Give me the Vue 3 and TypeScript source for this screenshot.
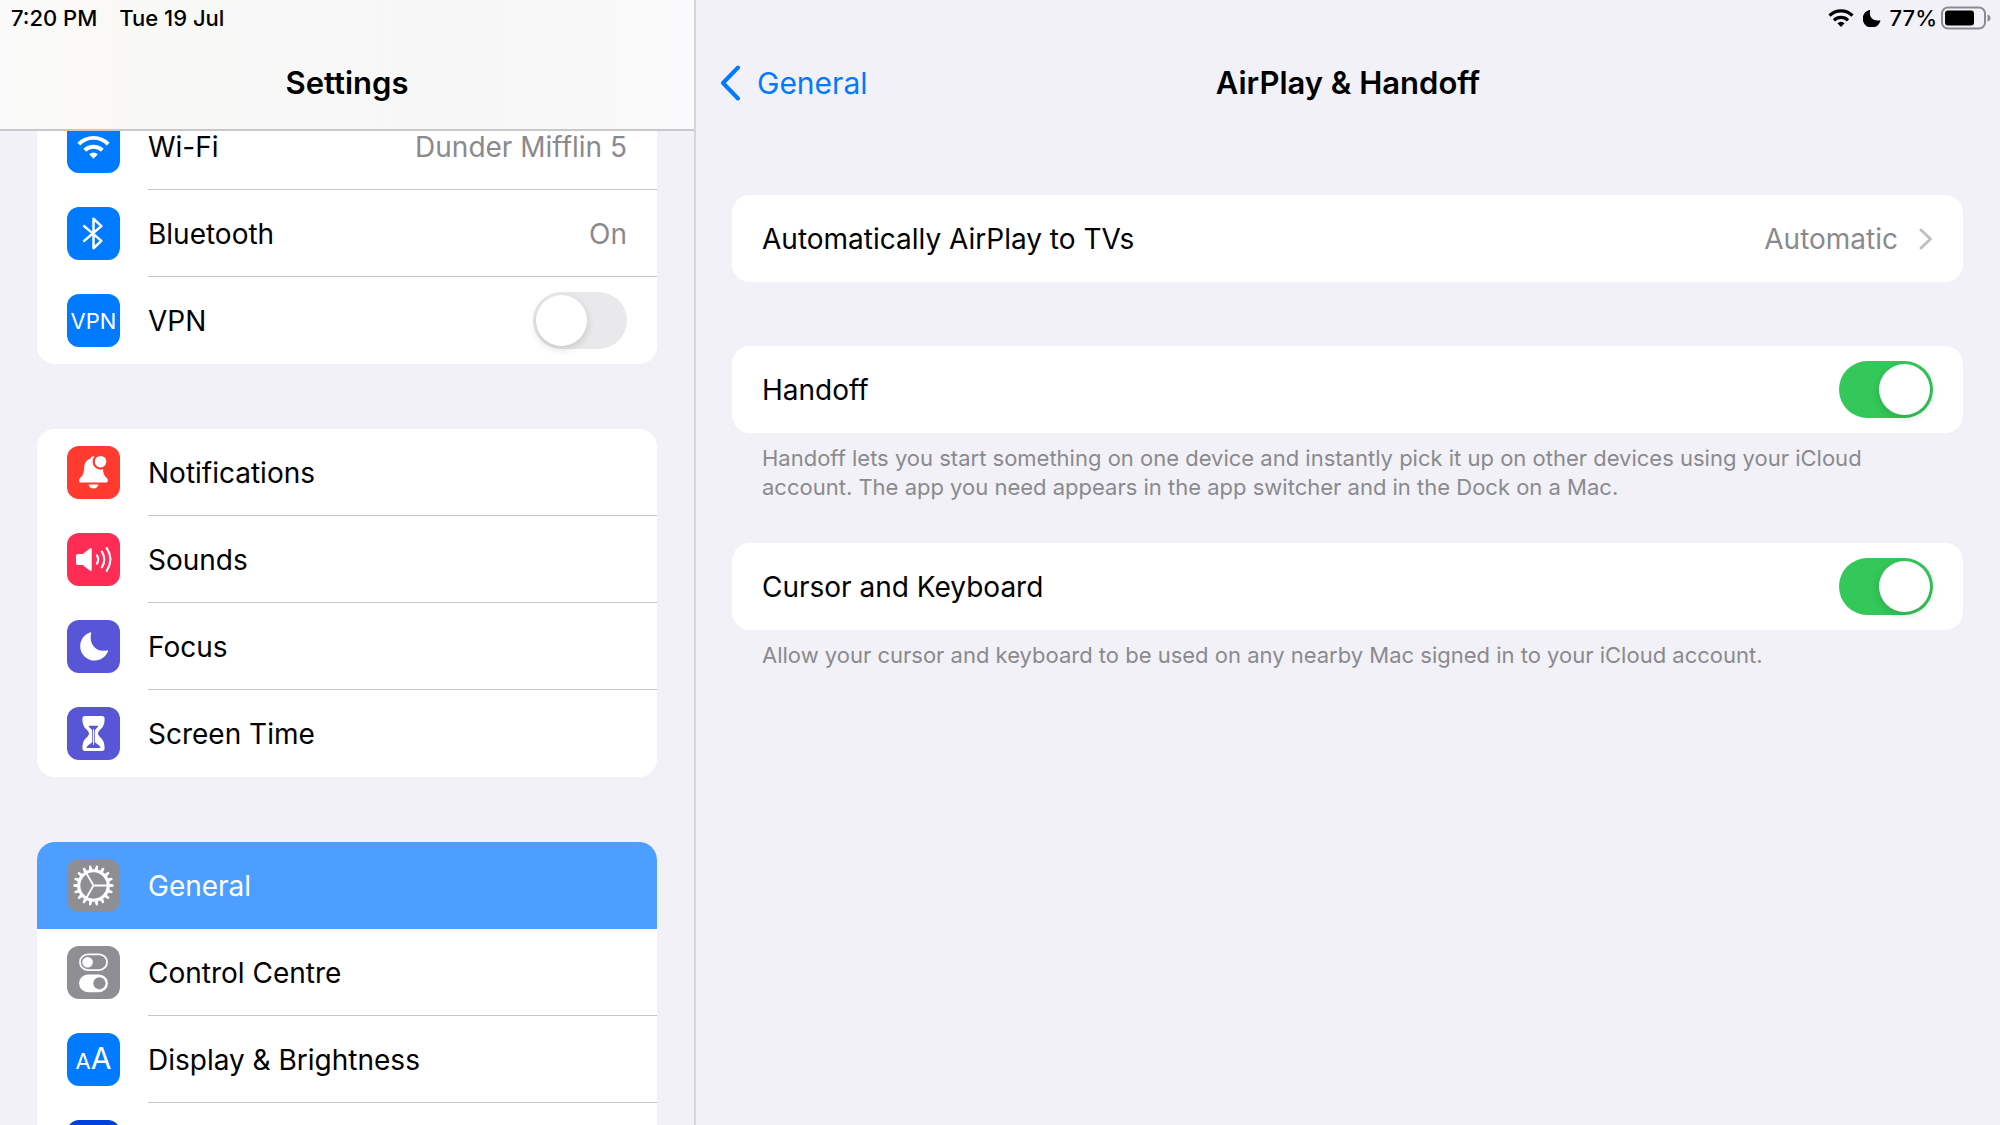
<script setup lang="ts">
import { ref } from 'vue'

type IconName =
  | 'wifi' | 'bluetooth' | 'vpn' | 'bell' | 'sound' | 'moon'
  | 'hourglass' | 'gear' | 'switches' | 'text' | 'home'

interface Row {
  icon: IconName
  color: string
  label?: string
  value?: string
  toggle?: boolean
}

const groups: Row[][] = [
  [
    { icon: 'wifi', color: 'blue', label: 'Wi-Fi', value: 'Dunder Mifflin 5' },
    { icon: 'bluetooth', color: 'blue', label: 'Bluetooth', value: 'On' },
    { icon: 'vpn', color: 'blue', label: 'VPN', toggle: true },
  ],
  [
    { icon: 'bell', color: 'red', label: 'Notifications' },
    { icon: 'sound', color: 'pink', label: 'Sounds' },
    { icon: 'moon', color: 'indigo', label: 'Focus' },
    { icon: 'hourglass', color: 'indigo', label: 'Screen Time' },
  ],
  [
    { icon: 'gear', color: 'gray', label: 'General' },
    { icon: 'switches', color: 'gray', label: 'Control Centre' },
    { icon: 'text', color: 'blue', label: 'Display & Brightness' },
    { icon: 'home', color: 'navy' },
  ],
]

const selected = ref('General')
const vpn = ref(false)
const handoff = ref(true)
const cursor = ref(true)
const teeth = Array.from({ length: 18 }, (_, i) => 10 + i * 20)
</script>

<template>
  <div class="app">
    <aside class="sidebar">
      <header class="head sidebar-head">
        <div class="status">
          <span>7:20 PM</span>
          <span>Tue 19 Jul</span>
        </div>
        <div class="nav"><h1 class="title">Settings</h1></div>
      </header>
      <nav class="list">
        <ul v-for="(group, g) in groups" :key="g" class="card">
          <li v-for="row in group" :key="row.icon">
            <component
              :is="row.toggle ? 'label' : 'button'"
              class="row"
              :class="{ selected: row.label === selected }"
              @click="!row.toggle && row.label && (selected = row.label)"
            >
              <span class="icon" :class="row.color">
                <span v-if="row.icon === 'vpn'" class="vpn">VPN</span>
                <span v-else-if="row.icon === 'text'" class="letters"><span class="small-a">A</span>A</span>
                <svg v-else viewBox="0 0 54 54" aria-hidden="true">
                  <g v-if="row.icon === 'wifi'" fill="none" stroke="#fff" stroke-width="4">
                    <path d="M12 24.5a21 21 0 0 1 30 0" />
                    <path d="M18 30.8a13 13 0 0 1 18 0" />
                    <path d="M27 39.5l-4.4-4.5q4.4-3.8 8.8 0z" fill="#fff" stroke="none" />
                  </g>
                  <path
                    v-else-if="row.icon === 'bluetooth'"
                    d="M17.5 19.5L35 34.500L27 42V12L35 19.5L17.5 34.5"
                    fill="none" stroke="#fff" stroke-width="2.6" stroke-linecap="round" stroke-linejoin="round"
                  />
                  <g v-else-if="row.icon === 'bell'" fill="#fff">
                    <path d="M27 10.5c-1.5 0-2.7.8-3 2.200c-4.5 1.500-6.300 5-6.600 10c-.3 5-1 7-4 10c-1.600 1.700-1.600 4.600 1 4.600h25.200c2.600 0 2.600-2.900 1-4.600c-3-3-3.700-5-4-10c-.3-5-2.100-8.500-6.600-10c-.3-1.400-1.500-2.200-3-2.200z" />
                    <path d="M22 39.2h10c-.5 2.600-2.400 4-5 4s-4.500-1.400-5-4z" />
                    <circle cx="34.2" cy="16" r="7" stroke="#ff3b30" stroke-width="2.2" />
                  </g>
                  <g v-else-if="row.icon === 'sound'" fill="none" stroke="#fff" stroke-width="2.2" stroke-linecap="round">
                    <path d="M11 21.5h5l7.500-6q1.700-1 1.700 1v21q0 2-1.700 1l-7.500-6h-5q-1.800 0-1.800-2v-7q0-2 1.800-2z" fill="#fff" stroke="none" />
                    <path d="M30.5 22.8q2.600 4.200 0 8.400M35.500 19q5 8 0 16M40.500 15.500q7.600 11.500 0 23" />
                  </g>
                  <path v-else-if="row.icon === 'moon'" d="M23.5 12.7q1.600-.6 1.100 1c-2.600 10.200 4.800 19.800 16 17.300q1.800-.4 1.100 1.200a14.700 14.700 0 1 1-18.200-19.500z" fill="#fff" />
                  <g v-else-if="row.icon === 'hourglass'">
                    <path d="M18.5 9.2h17q2.800 0 2.800 2.800c0 7-2.300 9.500-5.300 12q-2.800 3 0 6c3 2.500 5.300 5 5.300 12q0 2.800-2.800 2.800h-17q-2.800 0-2.800-2.800c0-7 2.300-9.500 5.300-12q2.800-3 0-6c-3-2.500-5.300-5-5.300-12q0-2.800 2.800-2.800z" fill="#fff" />
                    <path d="M22 19h10q-.6 2-2.600 3.500q-1.100 1-1.100 2.500v11l4.700 3.500q1 .8 1 2.300h-14q0-1.500 1-2.300l4.700-3.500v-11q0-1.500-1.100-2.500q-2-1.500-2.600-3.500z" fill="#5856d6" />
                    <path d="M27 22.500v16" stroke="#fff" stroke-width="1" />
                  </g>
                  <g v-else-if="row.icon === 'gear'" fill="#fff">
                    <circle cx="27" cy="27" r="15" fill="none" stroke="#fff" stroke-width="3.2" />
                    <path v-for="t in teeth" :key="t" d="M25 12l1-5.500h2l1 5.500z" :transform="`rotate(${t} 27 27)`" />
                    <path d="M27 27h15M27 27l-7.500-13M27 27l-7.500 13" stroke="#fff" stroke-width="1.8" />
                  </g>
                  <g v-else-if="row.icon === 'switches'" fill="#fff">
                    <rect x="13.2" y="8.5" width="27.6" height="16" rx="8" fill="none" stroke="#fff" stroke-width="1.8" />
                    <circle cx="21" cy="16.5" r="5.4" />
                    <rect x="12.3" y="29" width="29.4" height="18" rx="9" />
                    <circle cx="33" cy="38" r="6.2" fill="#8e8e93" />
                  </g>
                </svg>
              </span>
              <span class="body">
                <span class="label">{{ row.label }}</span>
                <span v-if="row.value" class="value">{{ row.value }}</span>
                <input v-if="row.toggle" v-model="vpn" class="switch" type="checkbox" role="switch">
              </span>
            </component>
          </li>
        </ul>
      </nav>
    </aside>

    <main class="detail">
      <header class="head">
        <div class="status status-right">
          <svg class="s-wifi" viewBox="0 0 26 20" aria-label="Wi-Fi connected">
            <g fill="none" stroke="#000" stroke-width="3.2">
              <path d="M1.5 7.6a16.300 16.300 0 0 1 23 0" />
              <path d="M6 12.3a10 10 0 0 1 14 0" />
            </g>
            <path d="M13 19l-3.600-3.700q3.600-3 7.200 0z" />
          </svg>
          <svg class="s-moon" viewBox="0 0 18 18" aria-label="Focus on">
            <path d="M6.3 1c.6-.3 1 0 .8.700c-1.500 6.300 3 10.900 9.400 9.700c.8-.2 1.100.2.800.9a9 9 0 1 1-11-11.300z" />
          </svg>
          <span class="charge">
            <span>77%</span>
            <svg class="battery" viewBox="0 0 50 24" aria-label="Battery">
              <rect x="1" y="1.500" width="43" height="21" rx="6" fill="none" stroke="#8c8c90" stroke-width="2" />
              <rect x="4" y="4.500" width="29" height="15" rx="3" />
              <path d="M46.500 8.500q3 1 3 3.500t-3 3.500z" fill="#8c8c90" />
            </svg>
          </span>
        </div>
        <div class="nav">
          <a class="back" href="#general">
            <svg viewBox="0 0 20 36" aria-hidden="true">
              <path d="M18 2.500L3 18L18 33.500" fill="none" stroke="#007aff" stroke-width="4" stroke-linecap="round" stroke-linejoin="round" />
            </svg>
            General
          </a>
          <h2 class="title">AirPlay &amp; Handoff</h2>
        </div>
      </header>

      <div class="content">
        <section class="card">
          <button class="row">
            <span class="body">
              <span class="label">Automatically AirPlay to TVs</span>
              <span class="value">Automatic</span>
              <svg class="chevron" viewBox="0 0 14 22" aria-hidden="true">
                <path d="M2 2L11.500 11L2 20" fill="none" stroke="#c0c0c3" stroke-width="3" stroke-linecap="round" stroke-linejoin="round" />
              </svg>
            </span>
          </button>
        </section>

        <section class="block">
          <div class="card">
            <label class="row">
              <span class="body">
                <span class="label">Handoff</span>
                <input v-model="handoff" class="switch" type="checkbox" role="switch">
              </span>
            </label>
          </div>
          <p class="note">Handoff lets you start something on one device and instantly pick it up on other devices using your iCloud account. The app you need appears in the app switcher and in the Dock on a Mac.</p>
        </section>

        <section class="block">
          <div class="card">
            <label class="row">
              <span class="body">
                <span class="label">Cursor and Keyboard</span>
                <input v-model="cursor" class="switch" type="checkbox" role="switch">
              </span>
            </label>
          </div>
          <p class="note">Allow your cursor and keyboard to be used on any nearby Mac signed in to your iCloud account.</p>
        </section>
      </div>
    </main>
  </div>
</template>

<style>
body {
  margin: 0;
  background: #f2f1f7;
}
</style>

<style scoped>
.app {
  display: grid;
  grid-template-columns: 34.8% minmax(0, 1fr);
  height: 100vh;
  font-family: Inter, "Liberation Sans", sans-serif;
  font-size: 28px;
  line-height: 36px;
  color: #000;
  background: #f2f1f7;
}

.sidebar {
  display: flex;
  flex-direction: column;
  min-height: 0;
  overflow: hidden;
  border-right: 2px solid #d6d5da;
}

.head {
  flex: none;
}

.sidebar-head {
  z-index: 1;
  border-bottom: 2px solid #c8c8cc;
  background: linear-gradient(90deg, #fafafa 0%, #faf9f5 14%, #f8f8f7 28%, #f7f7f7 70%, #fafafc 100%);
}

.status {
  display: flex;
  align-items: center;
  gap: 22px;
  height: 36px;
  padding: 0 11px;
  font-size: 22px;
  font-weight: 500;
}

.status-right {
  justify-content: flex-end;
  gap: 9px;
  padding-right: 9px;
}

.charge {
  display: flex;
  align-items: center;
  gap: 4px;
}

.s-wifi {
  width: 26px;
  height: 20px;
}

.s-moon {
  width: 18px;
  height: 18px;
}

.battery {
  width: 50px;
  height: 24px;
}

.nav {
  position: relative;
  display: flex;
  align-items: center;
  justify-content: center;
  height: 93px;
}

.title {
  margin: 0;
  font-size: 31px;
  font-weight: 600;
}

.back {
  position: absolute;
  left: 24px;
  display: flex;
  align-items: center;
  gap: 17px;
  font-size: 30px;
  color: #007aff;
  text-decoration: none;
}

.back svg {
  width: 20px;
  height: 36px;
}

.list {
  display: flex;
  flex-direction: column;
  gap: 65px;
  margin-top: -28px;
  padding: 0 37px;
}

.card {
  flex: none;
  margin: 0;
  padding: 0;
  list-style: none;
  overflow: hidden;
  border-radius: 18px;
  background: #fff;
}

.row {
  display: flex;
  gap: 28px;
  align-items: center;
  box-sizing: border-box;
  width: 100%;
  height: 87px;
  padding: 0 0 0 30px;
  border: 0;
  background: none;
  font: inherit;
  color: inherit;
  text-align: left;
}

.selected {
  background: #4c9fff;
  color: #fff;
}

.icon {
  display: flex;
  flex: none;
  align-items: center;
  justify-content: center;
  width: 53px;
  height: 53px;
  border-radius: 12px;
  overflow: hidden;
  color: #fff;
}

.icon svg {
  width: 53px;
  height: 53px;
}

.blue { background: #007aff; }
.red { background: #ff3b30; }
.pink { background: #ff2d55; }
.indigo { background: #5856d6; }
.gray { background: #8e8e93; }
.navy { background: #0040dd; }

.vpn {
  font-size: 22px;
}

.letters {
  font-size: 30px;
}

.small-a {
  font-size: 22px;
}

.body {
  display: flex;
  flex: 1;
  align-items: center;
  box-sizing: border-box;
  height: 100%;
  padding-right: 30px;
}

li:not(:last-child) .row:not(.selected) .body {
  box-shadow: inset 0 -1px #c6c6c8;
}

.label {
  flex: 1;
}

.value {
  color: #8a8a8e;
}

.chevron {
  width: 14px;
  height: 22px;
  margin-left: 21px;
}

.switch {
  flex: none;
  appearance: none;
  width: 94px;
  height: 57px;
  margin: 0;
  padding: 3px;
  border-radius: 29px;
  background: #e9e9eb;
}

.switch::before {
  content: "";
  display: block;
  width: 51px;
  height: 51px;
  border-radius: 50%;
  background: #fff;
  box-shadow: 0 3px 8px rgba(0, 0, 0, 0.15);
}

.switch:checked {
  background: #34c759;
}

.switch:checked::before {
  margin-left: auto;
}

.content {
  display: flex;
  flex-direction: column;
  padding: 66px 37px 0 36px;
}

.block {
  margin-bottom: 41px;
}

.content > .card {
  margin-bottom: 64px;
}

.note {
  margin: 0;
  padding: 11px 30px 0;
  font-size: 22px;
  line-height: 29px;
  color: #8a8a8e;
}
</style>
